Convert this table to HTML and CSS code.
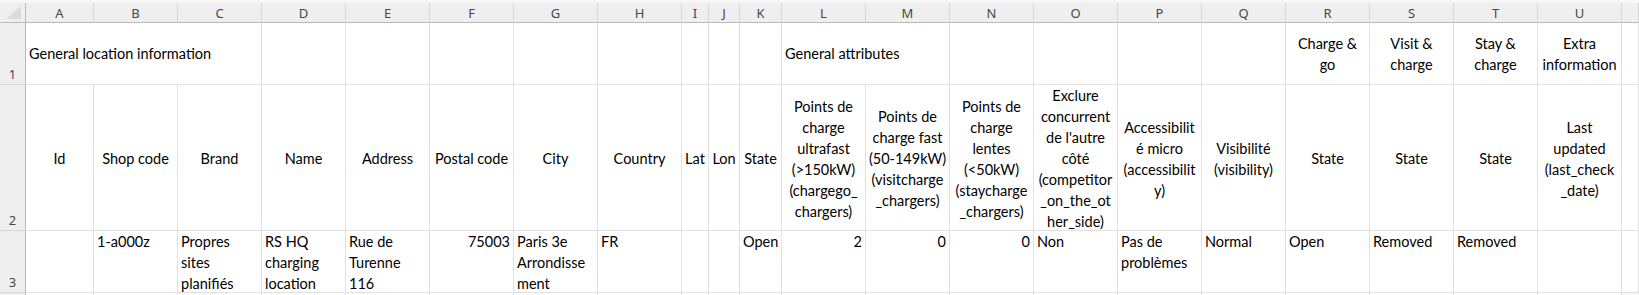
FILE: index.html
```html
<!DOCTYPE html>
<html lang="fr">
<head>
<meta charset="utf-8">
<title>Sheet</title>
<link rel="stylesheet" href="styles.css">
</head>
<body>
<div class="sheet">
  <!-- column headers -->
  <div class="corner"><svg class="tri" width="16" height="14" viewBox="0 0 16 14"><polygon points="15,0 15,13 0,13" fill="#dcdcdc"/></svg></div>
  <div class="ch">A</div><div class="ch">B</div><div class="ch">C</div><div class="ch">D</div><div class="ch">E</div><div class="ch">F</div><div class="ch">G</div><div class="ch">H</div><div class="ch">I</div><div class="ch">J</div><div class="ch">K</div><div class="ch">L</div><div class="ch">M</div><div class="ch">N</div><div class="ch">O</div><div class="ch">P</div><div class="ch">Q</div><div class="ch">R</div><div class="ch">S</div><div class="ch">T</div><div class="ch">U</div><div class="ch"></div>

  <!-- row 1 -->
  <div class="rh">1</div>
  <div class="c r1 span3">General location information</div>
  <div class="c r1"></div><div class="c r1"></div><div class="c r1"></div><div class="c r1"></div><div class="c r1"></div><div class="c r1"></div><div class="c r1"></div><div class="c r1"></div>
  <div class="c r1 span2">General attributes</div>
  <div class="c r1"></div><div class="c r1"></div><div class="c r1"></div><div class="c r1"></div>
  <div class="c r1 ctr">Charge &amp;<br>go</div>
  <div class="c r1 ctr">Visit &amp;<br>charge</div>
  <div class="c r1 ctr">Stay &amp;<br>charge</div>
  <div class="c r1 ctr">Extra<br>information</div>
  <div class="c r1"></div>

  <!-- row 2 -->
  <div class="rh">2</div>
  <div class="c r2">Id</div>
  <div class="c r2">Shop code</div>
  <div class="c r2">Brand</div>
  <div class="c r2">Name</div>
  <div class="c r2">Address</div>
  <div class="c r2">Postal code</div>
  <div class="c r2">City</div>
  <div class="c r2">Country</div>
  <div class="c r2">Lat</div>
  <div class="c r2">Lon</div>
  <div class="c r2">State</div>
  <div class="c r2">Points de<br>charge<br>ultrafast<br>(&gt;150kW)<br>(chargego_<br>chargers)</div>
  <div class="c r2">Points de<br>charge fast<br>(50-149kW)<br>(visitcharge<br>_chargers)</div>
  <div class="c r2">Points de<br>charge<br>lentes<br>(&lt;50kW)<br>(staycharge<br>_chargers)</div>
  <div class="c r2">Exclure<br>concurrent<br>de l'autre<br>côté<br>(competitor<br>_on_the_ot<br>her_side)</div>
  <div class="c r2">Accessibilit<br>é micro<br>(accessibilit<br>y)</div>
  <div class="c r2">Visibilité<br>(visibility)</div>
  <div class="c r2">State</div>
  <div class="c r2">State</div>
  <div class="c r2">State</div>
  <div class="c r2">Last<br>updated<br>(last_check<br>_date)</div>
  <div class="c r2"></div>

  <!-- row 3 -->
  <div class="rh">3</div>
  <div class="c r3"></div>
  <div class="c r3">1-a000z</div>
  <div class="c r3">Propres<br>sites<br>planifiés</div>
  <div class="c r3">RS HQ<br>charging<br>location</div>
  <div class="c r3">Rue de<br>Turenne<br>116</div>
  <div class="c r3 num">75003</div>
  <div class="c r3">Paris 3e<br>Arrondisse<br>ment</div>
  <div class="c r3">FR</div>
  <div class="c r3"></div>
  <div class="c r3"></div>
  <div class="c r3">Open</div>
  <div class="c r3 num">2</div>
  <div class="c r3 num">0</div>
  <div class="c r3 num">0</div>
  <div class="c r3">Non</div>
  <div class="c r3">Pas de<br>problèmes</div>
  <div class="c r3">Normal</div>
  <div class="c r3">Open</div>
  <div class="c r3">Removed</div>
  <div class="c r3">Removed</div>
  <div class="c r3"></div>
  <div class="c r3"></div>

  <!-- row 4 (partial) -->
  <div class="rh"></div>
  <div class="c"></div><div class="c"></div><div class="c"></div><div class="c"></div><div class="c"></div><div class="c"></div><div class="c"></div><div class="c"></div><div class="c"></div><div class="c"></div><div class="c"></div><div class="c"></div><div class="c"></div><div class="c"></div><div class="c"></div><div class="c"></div><div class="c"></div><div class="c"></div><div class="c"></div><div class="c"></div><div class="c"></div>
</div>
</body>
</html>
```

FILE: styles.css
```css
html, body {
  margin: 0;
  padding: 0;
  background: #ffffff;
  overflow: hidden;
}

.sheet {
  display: grid;
  grid-template-columns: 26px 68px repeat(7, 84px) 27px 31px 42px repeat(10, 84px) 1fr;
  grid-template-rows: 20px 62px 146px 62px 40px;
  padding-top: 3px;
  background: #f7f7f7;
  width: 1639px;
  height: 295px;
  overflow: hidden;
  box-sizing: border-box;
}

.corner {
  background: #efefef;
  border-right: 1px solid #b9b9b9;
  border-bottom: 1px solid #b9b9b9;
  display: flex;
  align-items: flex-end;
  justify-content: flex-end;
  padding: 0 3px 2px 0;
}

.tri {
  display: block;
}

.ch {
  background: #efefef;
  border-right: 1px solid #d6d6d6;
  border-bottom: 1px solid #b9b9b9;
  font-family: "Noto Sans", "Open Sans", sans-serif;
  font-size: 13px;
  color: #474747;
  display: flex;
  align-items: center;
  justify-content: center;
  padding-top: 1px;
}

.rh {
  background: #efefef;
  border-right: 1px solid #b9b9b9;
  border-bottom: 1px solid #d6d6d6;
  font-family: "Noto Sans", "Open Sans", sans-serif;
  font-size: 13px;
  line-height: 15px;
  color: #474747;
  display: flex;
  align-items: flex-end;
  justify-content: center;
  padding-bottom: 2px;
}

.c {
  background: #ffffff;
  border-right: 1px solid #e1e1e1;
  border-bottom: 1px solid #e1e1e1;
  font-family: Lato, "Liberation Sans", sans-serif;
  font-size: 14.5px;
  line-height: 21px;
  color: #000000;
  white-space: nowrap;
  padding: 0 3px;
  min-width: 0;
}

.span3 { grid-column: span 3; }
.span2 { grid-column: span 2; }

.r1 {
  display: flex;
  align-items: center;
}

.r1.ctr {
  justify-content: center;
  text-align: center;
}

.r2 {
  display: flex;
  align-items: center;
  justify-content: center;
  text-align: center;
  padding-top: 2px;
}

.r3 {
  overflow: hidden;
}

.num {
  text-align: right;
}
```
